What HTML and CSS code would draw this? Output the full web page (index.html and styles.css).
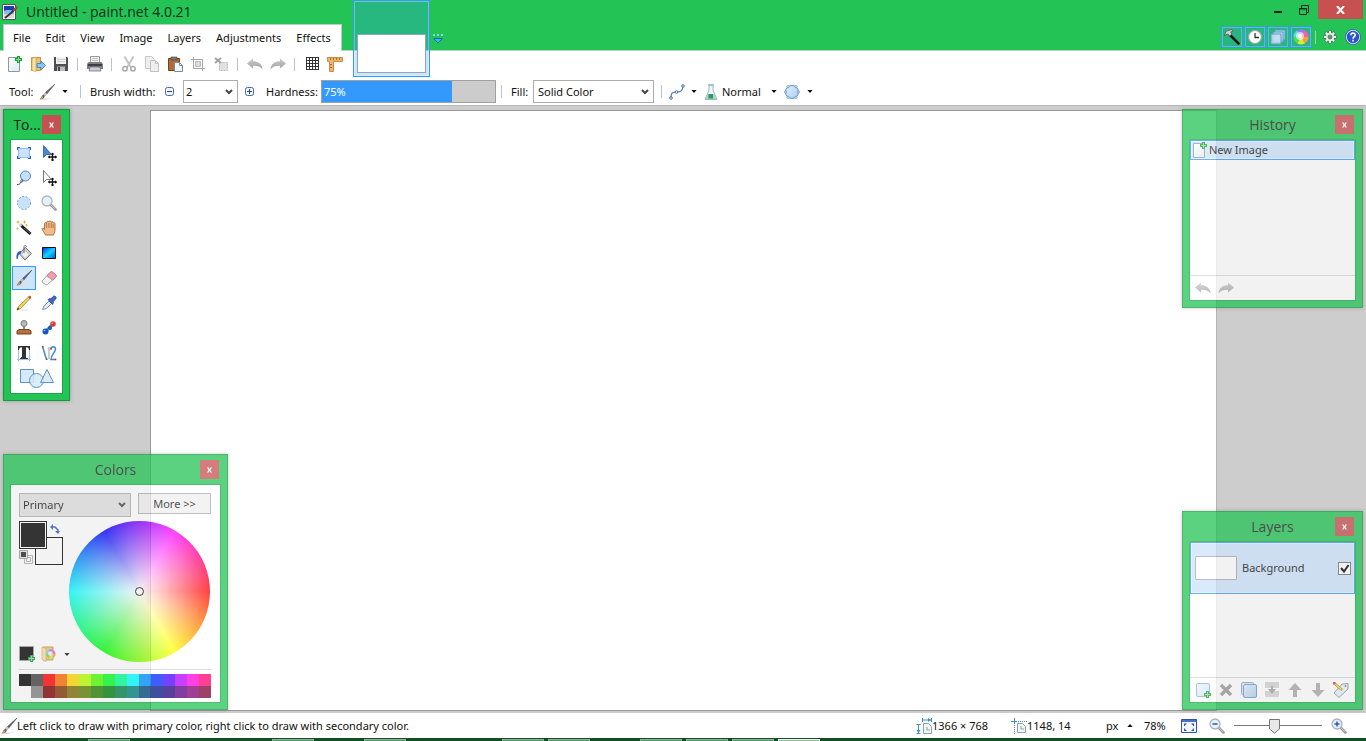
FILE: index.html
```
<!DOCTYPE html>
<html lang="en">
<head>
    <meta charset="UTF-8">
    <meta name="viewport" content="width=device-width, initial-scale=1.0">
    <title>Untitled - paint.net 4.0.21</title>
    <link rel="stylesheet" href="styles.css">
</head>
<body>
    <!-- shared icons -->
    <svg class="defs" aria-hidden="true">
        <defs>
            <linearGradient id="gray" x1="0" y1="0" x2="0" y2="1"><stop offset="0" stop-color="#cccccc"/><stop offset="1" stop-color="#a2a2a2"/></linearGradient>
            <linearGradient id="page" x1="0" y1="0" x2="1" y2="1"><stop offset="0" stop-color="#fff"/><stop offset="1" stop-color="#dde9ee"/></linearGradient>
            <linearGradient id="blue" x1="0" y1="0" x2="1" y2="1"><stop offset="0" stop-color="#e4f1fd"/><stop offset="1" stop-color="#a9cdf0"/></linearGradient>
            <linearGradient id="sea" x1="0" y1="0" x2="1" y2="1"><stop offset="0" stop-color="#0030e8"/><stop offset=".5" stop-color="#10d8ff"/><stop offset="1" stop-color="#0050e8"/></linearGradient>
        </defs>
        <symbol id="i-new" viewBox="0 0 16 16">
            <path d="M1.500 1.500h11v14h-11z" fill="url(#page)" stroke="#8b9aa3"/>
            <path d="M10 0h3v2h2v3h-2v2h-3V5H8V2h2z" fill="#1d9a35"/>
            <path d="M11 1h1v2h2v1h-2v2h-1V4H9V3h2z" fill="#7be387"/>
        </symbol>
        <symbol id="i-undo" viewBox="0 0 16 16">
            <path d="M0 7.500 6 2.500v2.700c5 0 9 2.500 9.500 8C13.500 10.500 10.500 9.600 6 9.700v2.800z" fill="url(#gray)"/>
        </symbol>
        <symbol id="i-redo" viewBox="0 0 16 16">
            <path d="M16 7.500 10 2.500v2.700C5 5.200 1 7.700.5 13.200 2.500 10.500 5.500 9.600 10 9.700v2.800z" fill="url(#gray)"/>
        </symbol>
        <symbol id="i-brush" viewBox="0 0 16 16">
            <path d="M4 14.500h10l-8 1.500H2z" fill="#ddd"/>
            <path d="M15.800.2 6.500 8.500l1.300 1.500z" fill="#666" stroke="#444" stroke-width=".6"/>
            <path d="M6.500 8.500 4.500 10.800l1.300 1.200 2-2z" fill="#ccc" stroke="#888" stroke-width=".5"/>
            <path d="M4.500 10.800c-2 .5-2 2.700-4 4.700 2.500 0 4.800-.8 5.300-3.500z" fill="#6a5a50"/>
            <path d="m3.500 12-2.500 3.500 3-1.500z" fill="#e9b564"/>
        </symbol>
        <symbol id="i-caret" viewBox="0 0 7 4"><path d="M0 0h7L3.500 4z" fill="#111"/></symbol>
        <symbol id="i-glass" viewBox="0 0 16 16">
            <path d="m10 10 4.500 4.500" stroke="#969696" stroke-width="2.500" stroke-linecap="round"/>
            <path d="m10 9.800 4.300 4.200" stroke="#d0d0d0" stroke-width="1"/>
            <circle cx="6" cy="6" r="5" fill="#e6f0fa" stroke="#adb4bd" stroke-width="1.300"/>
        </symbol>
        <symbol id="i-wheel" viewBox="0 0 16 16">
            <path d="M8 8 15.500 8A7.500 7.500 0 0 1 11.700 14.500z" fill="#ff9b42"/>
            <path d="M8 8 11.800 14.500A7.500 7.500 0 0 1 4.200 14.500z" fill="#d9ec3b"/>
            <path d="M8 8 4.300 14.500A7.500 7.500 0 0 1 .5 8z" fill="#4fdc5a"/>
            <path d="M8 8 .5 8A7.500 7.500 0 0 1 4.300 1.500z" fill="#5fd5f5"/>
            <path d="M8 8 4.200 1.500A7.500 7.500 0 0 1 11.800 1.500z" fill="#a278f5"/>
            <path d="M8 8 11.700 1.500A7.500 7.500 0 0 1 15.500 8z" fill="#f95cb5"/>
            <circle cx="7" cy="7" r="4" fill="#fff" opacity=".6"/>
            <circle cx="7" cy="7" r="2.200" fill="#fff" opacity=".8"/>
        </symbol>
        <symbol id="i-plus" viewBox="0 0 7 7">
            <path d="M2 0h3v2h2v3H5v2H2V5H0V2h2z" fill="#1d9a35"/><path d="M3 1h1v2h2v1H4v2H3V4H1V3h2z" fill="#7be387"/>
        </symbol>
        <symbol id="i-x" viewBox="0 0 7 7"><path d="M0 0h2.200L3.500 2 4.800 0H7L4.700 3.500 7 7H4.800L3.500 5 2.200 7H0l2.300-3.500z" fill="#fff"/></symbol>
    </svg>

    <header class="titlebar">
        <div class="caption">
            <svg class="icon" viewBox="0 0 16 16"><path d="M.5.5h13v15H.5z" fill="#f5f5f5" stroke="#555"/><path d="M2 2h10v7H2z" fill="#173fae"/><path d="M2 7c3-2 6 0 10-1v4H2z" fill="#8eb9e8"/><path d="M2 10h10v4H2z" fill="#dcdcdc"/><path d="m15 3-6 6-6 5" stroke="#35353f" stroke-width="2" fill="none"/><path d="m15.500 2.500-4 4" stroke="#c05040" stroke-width="1.500"/></svg>
            <h1>Untitled - paint.net 4.0.21</h1>
            <div class="window-buttons">
                <button class="win" aria-label="Minimize"><svg width="10" height="10"><path d="M1 6h8v2H1z" fill="#222"/></svg></button>
                <button class="win" aria-label="Restore"><svg width="10" height="10"><path d="M.5 3.500h7v6h-7zM.5 4h7M2.500 3V.5h7v7H8" fill="none" stroke="#222"/></svg></button>
                <button class="win close" aria-label="Close"><svg width="9" height="8"><path d="m1 0 7 8M8 0 1 8" stroke="#fff" stroke-width="2"/></svg></button>
            </div>
        </div>
        <div class="menu-row">
            <nav class="menu">
                <button>File</button>
                <button>Edit</button>
                <button>View</button>
                <button>Image</button>
                <button>Layers</button>
                <button>Adjustments</button>
                <button>Effects</button>
            </nav>
            <div class="tray">
                <button class="toggle" aria-label="Tools"><svg class="icon" viewBox="0 0 16 16"><path d="m6 6 8.500 8.500" stroke="#181818" stroke-width="2.500" stroke-linecap="round"/><path d="M0 6.500 2.500 2 8 .5l1 1.500-2.500 1L8 5 5.500 7 4 5z" fill="#d5d5d5" stroke="#555" stroke-width=".8"/></svg></button>
                <button class="toggle" aria-label="History"><svg class="icon" viewBox="0 0 16 16"><circle cx="8" cy="8" r="6.500" fill="#fff" stroke="#9aa" stroke-width="1.200"/><path d="M8 4v4.500h4" fill="none" stroke="#333" stroke-width="1.300"/></svg></button>
                <button class="toggle" aria-label="Layers"><svg class="icon" viewBox="0 0 16 16"><g fill="#c4dff3" stroke="#5c9ccc" fill-opacity=".8"><path d="M5 1h10v10H5z"/><path d="M3 3h10v10H3z"/><path d="M1 5h10v10H1z"/></g></svg></button>
                <button class="toggle" aria-label="Colors"><svg class="icon"><use href="#i-wheel"/></svg></button>
                <span class="tray-sep"></span>
                <button class="plain" aria-label="Settings"><svg class="icon" viewBox="0 0 16 16"><path d="M8 1.500v13M1.500 8h13M3.400 3.400l9.200 9.200M12.600 3.400l-9.200 9.200" stroke="#4e7a5c" stroke-width="3.400"/><path d="M8 2v12M2 8h12M3.800 3.800l8.400 8.400M12.200 3.800l-8.400 8.400" stroke="#eee" stroke-width="2"/><circle cx="8" cy="8" r="4" fill="#eee"/><circle cx="8" cy="8" r="2.100" fill="#3fa860" stroke="#666" stroke-width=".8"/></svg></button>
                <button class="plain" aria-label="Help"><svg class="icon" viewBox="0 0 16 16"><circle cx="8" cy="8" r="6.800" fill="#2c55c8" stroke="#dce6fb" stroke-width="1.200"/><circle cx="8" cy="8" r="7.500" fill="none" stroke="#2a4aa8" stroke-width=".7"/><path d="M5.800 6.300c0-3 4.600-2.800 4.400-.2C10.100 7.700 8 7.700 8 9.800M8 10.800v1.700" fill="none" stroke="#fff" stroke-width="1.600"/></svg></button>
            </div>
        </div>
        <div class="doc-strip">
            <button class="doc-tab" aria-label="Untitled"><span class="doc-thumb"></span></button>
            <button class="doc-more" aria-label="Image list"><svg width="10" height="10"><path d="M0 1h2M4 1h2M8 1h2" stroke="#86dcef" stroke-width="2"/><path d="M.5 4.500h9L5 9z" fill="#25b9f0" stroke="#1670a8"/></svg></button>
        </div>
    </header>

    <div class="toolbar main-tools">
        <button class="tb" aria-label="New"><svg class="icon"><use href="#i-new"/></svg></button>
        <button class="tb" aria-label="Open"><svg class="icon" viewBox="0 0 16 16"><path d="M1.500 1.500h9v13h-9z" fill="#ecc36c" stroke="#c79443"/><path d="M2 2.500 6 1v14.500l-4-1z" fill="#fbe3a4" stroke="#cf9f50" stroke-width=".7"/><path d="M7 7.500h4V5l4.500 4.500L11 14v-2.500H7z" fill="#8cc8f5" stroke="#3b82c4" stroke-width=".9"/></svg></button>
        <button class="tb" aria-label="Save"><svg class="icon" viewBox="0 0 16 16"><path d="M1 1h13l1 1v13H1z" fill="#4b4f55"/><path d="M3 1h10v7H3z" fill="#f0f0f0"/><path d="M4 10.500h8V15H4z" fill="#bbb"/><path d="M5 11h2v4H5z" fill="#444"/><path d="M4 3.500h8M4 5.500h8" stroke="#ccc"/></svg></button>
        <span class="sep"></span>
        <button class="tb" aria-label="Print"><svg class="icon" viewBox="0 0 16 16"><path d="M3.500.5h9v7h-9z" fill="#f4f4f4" stroke="#999"/><path d="M5 2.500h6M5 4.500h6" stroke="#bbb"/><path d="M1.500 6h13L16 8v5H0V8z" fill="#7b7f86"/><path d="M1 8h14v2H1z" fill="#3b3e45"/><path d="M3 11h10l1 4H2z" fill="#c9cdd3" stroke="#666" stroke-width=".7"/></svg></button>
        <span class="sep"></span>
        <button class="tb" aria-label="Cut"><svg class="icon" viewBox="0 0 16 16"><path d="m3.500.5 6.500 11M12.500.5 6 11.500" stroke="#c2c2c2" stroke-width="1.800"/><circle cx="4" cy="12.800" r="2.200" fill="none" stroke="#aaa" stroke-width="1.500"/><circle cx="12" cy="12.800" r="2.200" fill="none" stroke="#aaa" stroke-width="1.500"/></svg></button>
        <button class="tb" aria-label="Copy"><svg class="icon" viewBox="0 0 16 16"><path d="M1.500.5h6l3 3v9h-9z" fill="#eee" stroke="#c8c8c8"/><path d="M6.500 4.500h5l3 3v8h-8z" fill="#eee" stroke="#c0c0c0"/><path d="M11.500 4.500v3h3" fill="none" stroke="#c4c4c4"/></svg></button>
        <button class="tb" aria-label="Paste"><svg class="icon" viewBox="0 0 16 16"><path d="M1.500 2.500h11v12h-11z" fill="#b36a35" stroke="#74401c"/><path d="M4 1h6v3H4z" fill="#777" stroke="#444" stroke-width=".6"/><path d="M7.500 6.500h5l3 3v6h-8z" fill="#f1f6fb" stroke="#7c8ca0"/><path d="M12.500 6.500v3h3" fill="none" stroke="#7c8ca0"/></svg></button>
        <button class="tb" aria-label="Crop"><svg class="icon" viewBox="0 0 16 16"><path d="M1 3.500h11.500V15M3.500 1v11.500H15" fill="none" stroke="#a5a5a5"/><path d="M5.500 5.500h5v5h-5z" fill="#ddd" stroke="#bbb"/></svg></button>
        <button class="tb" aria-label="Deselect"><svg class="icon" viewBox="0 0 16 16"><path d="M6.500 6.500h8v8h-8z" fill="#e0e0e0" stroke="#bbb" stroke-dasharray="2 1"/><path d="m2 2 6 5M8 2 2 7" stroke="#a2a2a2" stroke-width="2"/></svg></button>
        <span class="sep"></span>
        <button class="tb" aria-label="Undo"><svg class="icon"><use href="#i-undo"/></svg></button>
        <button class="tb" aria-label="Redo"><svg class="icon"><use href="#i-redo"/></svg></button>
        <span class="sep"></span>
        <button class="tb" aria-label="Pixel grid"><svg class="icon" viewBox="0 0 16 16"><path d="M2 1.500h13M2 4.500h13M2 7.500h13M2 10.500h13M2 13.500h13M2.500 1v13M5.500 1v13M8.500 1v13M11.500 1v13M14.500 1v13" stroke="#333" fill="none"/></svg></button>
        <button class="tb" aria-label="Rulers"><svg class="icon" viewBox="0 0 16 16"><path d="M.5 1.500h15v4h-9v10h-4v-10h-2z" fill="#edb46c" stroke="#c98a4a"/><path d="M3.500 2v2M6.500 2v2M9.500 2v2M12.500 2v2M3 8.500h2M3 11.500h2" stroke="#a86c32"/></svg></button>
    </div>

    <div class="toolbar">
        <span class="label tool-label">Tool:</span>
        <button class="drop" aria-label="Tool"><svg class="icon"><use href="#i-brush"/></svg><svg class="caret"><use href="#i-caret"/></svg></button>
        <span class="sep"></span>
        <label class="label brush-label" for="brush-width">Brush width:</label>
        <button class="step" aria-label="Decrease"><svg width="9" height="9"><rect x=".5" y=".5" width="8" height="8" rx="2" fill="#eef3fb" stroke="#53679a"/><path d="M2 4.500h5" stroke="#274a8d"/></svg></button>
        <select id="brush-width" class="combo brush-width"><option>2</option></select>
        <button class="step" aria-label="Increase"><svg width="9" height="9"><rect x=".5" y=".5" width="8" height="8" rx="2" fill="#eef3fb" stroke="#53679a"/><path d="M2 4.500h5M4.500 2v5" stroke="#274a8d"/></svg></button>
        <label class="label hardness-label" for="hardness">Hardness:</label>
        <div class="hardness">
            <input type="range" id="hardness" min="0" max="100" value="75">
            <span>75%</span>
        </div>
        <span class="sep"></span>
        <label class="label fill-label" for="fill">Fill:</label>
        <select id="fill" class="combo fill"><option>Solid Color</option></select>
        <span class="sep wide"></span>
        <button class="drop" aria-label="Antialiasing"><svg class="icon" viewBox="0 0 16 16"><path d="M2 14C2 9 3 8 7.500 8S13.500 7 14 2" fill="none" stroke="#3e78b4" stroke-width="1.200"/><g fill="#fff" stroke="#3e6ea5"><circle cx="2" cy="14" r="1.300"/><circle cx="7.500" cy="8" r="1.300"/><circle cx="14" cy="2" r="1.300"/></g></svg><svg class="caret"><use href="#i-caret"/></svg></button>
        <button class="drop blend"><svg class="icon" viewBox="0 0 16 16"><path d="M6 1v5l-4 9.500h12L10 6V1z" fill="#edf6fa" stroke="#9ab8c4"/><path d="M4.500 10h7l2 5h-11z" fill="#9fd8bb"/><path d="M5.500 10h4.500v4.500H5.500z" fill="#2f9a5f"/><path d="M5 1h6" stroke="#9ab8c4" stroke-width="1.500"/></svg><span>Normal</span><svg class="caret"><use href="#i-caret"/></svg></button>
        <button class="drop" aria-label="Selection clipping"><svg class="icon" viewBox="0 0 16 16"><circle cx="8" cy="8" r="6.500" fill="url(#blue)" stroke="#5b8fc4"/><g fill="#fff" stroke="#5b8fc4" stroke-width=".8"><circle cx="1.500" cy="8" r="1.100"/><circle cx="14.500" cy="8" r="1.100"/><circle cx="4" cy="2.700" r="1.100"/><circle cx="12" cy="2.700" r="1.100"/><circle cx="4" cy="13.300" r="1.100"/><circle cx="12" cy="13.300" r="1.100"/></g></svg><svg class="caret"><use href="#i-caret"/></svg></button>
    </div>

    <main class="workspace">
        <div class="canvas"></div>

        <section class="palette tools" aria-label="Tools">
            <div class="palette-title"><h2>To...</h2><button class="palette-close" aria-label="Close"><svg><use href="#i-x"/></svg></button></div>
            <div class="palette-body tool-grid">
                <button aria-label="Rectangle select"><svg class="icon" viewBox="0 0 16 16"><path d="M2.500 3.500h11v9h-11z" fill="#c8e2fb" stroke="#4c86c8" stroke-dasharray="1 1"/><path d="M1 2h3v1H2v2H1zM15 2h-3v1h2v2h1zM1 14h3v-1H2v-2H1zM15 14h-3v-1h2v-2h1z" fill="#2068d0"/></svg></button>
                <button aria-label="Move selected pixels"><svg class="icon" viewBox="0 0 16 16"><path d="M2.500.5v12l3-3 5 0z" fill="#4a86d4" stroke="#2c5796" stroke-width=".8"/><path d="M11.500 8v8M7.500 12h8" stroke="#111" stroke-width="1.300"/><path d="m11.500 7.500 1.800 2H9.700zM11.500 16.500l1.800-2H9.700zM7 12l2-1.800v3.600zM16 12l-2-1.800v3.600z" fill="#111"/></svg></button>
                <button aria-label="Lasso select"><svg class="icon" viewBox="0 0 16 16"><circle cx="9.500" cy="6" r="5" fill="#c4e0fb" stroke="#4d86c0"/><path d="M6.500 9.500c-2 0-2.500 2.500-.5 2.500 1 0 1-1.500.5-2M5 12c-.5 2-2 2.500-4 2.500" fill="none" stroke="#444"/></svg></button>
                <button aria-label="Move selection"><svg class="icon" viewBox="0 0 16 16"><path d="M2.500.5v12l3-3 5 0z" fill="#fff" stroke="#46576e" stroke-width=".8"/><path d="M11.500 8v8M7.500 12h8" stroke="#111" stroke-width="1.300"/><path d="m11.500 7.500 1.800 2H9.700zM11.500 16.500l1.800-2H9.700zM7 12l2-1.800v3.600zM16 12l-2-1.800v3.600z" fill="#111"/></svg></button>
                <button aria-label="Ellipse select"><svg class="icon" viewBox="0 0 16 16"><circle cx="8" cy="8" r="6.500" fill="#c8e2fb" stroke="#6f9fd0" stroke-dasharray="2 1.500"/></svg></button>
                <button aria-label="Zoom"><svg class="icon"><use href="#i-glass"/></svg></button>
                <button aria-label="Magic wand"><svg class="icon" viewBox="0 0 16 16"><path d="M4 4.500 14.500 14" stroke="#1c1c1c" stroke-width="3"/><path d="m3.200 4 2.200 2" stroke="#ddd" stroke-width="2.600"/><path d="m8 8 6 5" stroke="#777" stroke-width=".7"/><path d="M2 .5v3M.5 2h3M8.500.5v3M7 2h3M1.500 7.500v2M.5 8.500h2M10.500 4v2M9.500 5h2" stroke="#d9b62d"/></svg></button>
                <button aria-label="Pan"><svg class="icon" viewBox="0 0 16 16"><path d="M4.500 15c-1-2-3-4.500-3.500-6.500.5-1 1.500-.5 2.500 1V3.500c.3-1.200 1.600-1.200 2 0C5.500.8 7.400.5 7.800 2c.2-1.500 2.200-1.300 2.400.3.600-1 1.900-.7 2.100.7.800-.7 1.700-.2 1.700 1V10c0 2-1 3.500-1.500 5z" fill="#eebd8a" stroke="#a8672e" stroke-width=".9"/><path d="M5.600 3.500V8M7.900 3v5M10.200 3v5M12.200 4v4" stroke="#a8672e" stroke-width=".8"/></svg></button>
                <button aria-label="Paint bucket"><svg class="icon" viewBox="0 0 16 16"><path d="M4 7.500 9.500 2.500l6 6L9 15 4 9.500z" fill="#c9cbcf" stroke="#77797d"/><path d="m9 6 3.500 3.500L9 13 6 9.500z" fill="#efefef"/><path d="M8 8V2c0-2 2.500-2 2.500 0" fill="none" stroke="#666"/><path d="M5 6C1.500 6 0 9 .5 14l1.500-.5c0-3 1-4.500 3-5z" fill="#2c5cc5"/></svg></button>
                <button aria-label="Gradient"><svg class="icon" viewBox="0 0 16 16"><path d="M1.500 2.500h13v11h-13z" fill="url(#sea)" stroke="#111"/></svg></button>
                <button class="selected" aria-label="Paintbrush"><svg class="icon"><use href="#i-brush"/></svg></button>
                <button aria-label="Eraser"><svg class="icon" viewBox="0 0 16 16"><path d="m1 11 8-8.500c1-1 2-1 3 0l2.500 2c1 1 1 2 0 3L7 14c-1 1-2 1-3 0l-2.500-1.500z" fill="#f3f3f3" stroke="#999" stroke-width=".9"/><path d="m6 6 3-3.500c1-1 2-1 3 0l2.500 2c1 1 1 2 0 3L11.500 10z" fill="#ef9fae" stroke="#c4727f" stroke-width=".8"/></svg></button>
                <button aria-label="Pencil"><svg class="icon" viewBox="0 0 16 16"><path d="m1 15 1.500-3.500L12.500 2l1.500 1.500L4.500 13.500z" fill="#f5dc56" stroke="#9b7a24" stroke-width=".8"/><path d="M12.500 2c1-1.500 3.500-.5 1.500 1.500z" fill="#e04f4f" stroke="#c03838"/><path d="m1 15 .8-2.200L3.300 14z" fill="#222"/><path d="M4 15h8" stroke="#ddd"/></svg></button>
                <button aria-label="Color picker"><svg class="icon" viewBox="0 0 16 16"><path d="M1.500 14.500 3 11l5-5 2.500 2.500-5 5z" fill="#dcebfb" stroke="#7d93b4"/><path d="m7 4.500 2-1 1 .5C12 1 13 .5 14.500 1.500S15 4.500 12 6.500l.5 1-1 2z" fill="#3f66cf" stroke="#27469b" stroke-width=".8"/></svg></button>
                <button aria-label="Clone stamp"><svg class="icon" viewBox="0 0 16 16"><circle cx="8" cy="3.500" r="3" fill="#bbb" stroke="#777"/><path d="M7 6.500h2V10H7z" fill="#888"/><path d="M3 9.500h10l2 1.500v3H1v-3z" fill="#ba7040" stroke="#71401c"/></svg></button>
                <button aria-label="Recolor"><svg class="icon" viewBox="0 0 16 16"><path d="m5 11 6-6" stroke="#339bd2" stroke-width="3"/><circle cx="4.500" cy="11.500" r="3" fill="#1a52c4"/><circle cx="9" cy="8" r="2" fill="#155c9c"/><circle cx="12" cy="4" r="2.800" fill="#df3a3a"/><circle cx="11.300" cy="3.300" r=".8" fill="#ffb0b0"/><circle cx="3.500" cy="10.500" r=".8" fill="#9fc4ff"/></svg></button>
                <button aria-label="Text"><svg class="icon" viewBox="0 0 16 16"><path d="M2.500 1v15M13.500 1v15M1 14.500h14" stroke="#9fc0ec"/><path d="M2 1h12v4h-1c-.3-2-1-2.700-3-2.700V12c0 .8.500 1.200 2 1.200v.8H4v-.8c1.500 0 2-.4 2-1.200V2.300C4 2.300 3.300 3 3 5H2z" fill="#333"/></svg></button>
                <button aria-label="Line / Curve"><svg class="icon" viewBox="0 0 16 16"><path d="m1.500 1.500 4 13M10 4c0-3 4.500-3 4.500 0S10 10 10 14.500h4.500" fill="none" stroke="#3b8cd0" stroke-width="1.500"/><path d="M8 2v12" stroke="#999"/><path d="M1 1h1.500v1.500H1zM5 13.500h1.500V15H5zM9.300 3.300h1.500v1.500H9.300zM13.800 13.800h1.500v1.500h-1.500z" fill="#e02020"/></svg></button>
                <button class="shapes" aria-label="Shapes"><svg viewBox="0 0 36 20"><g fill="#d5e9f8" stroke="#5c93c4"><path d="M1.500 1.500h13v13h-13z"/><circle cx="17.500" cy="12.500" r="7" fill-opacity=".85"/><path d="M28 1.500 34.500 14.500h-13z" fill-opacity=".85"/></g></svg></button>
            </div>
        </section>

        <section class="palette colors">
            <div class="palette-title"><h2>Colors</h2><button class="palette-close" aria-label="Close"><svg><use href="#i-x"/></svg></button></div>
            <div class="palette-body colors-body">
                <div class="colors-top">
                    <select class="combo which" aria-label="Active color"><option>Primary</option></select>
                    <button class="more">More &gt;&gt;</button>
                </div>
                <div class="colors-mid">
                    <div class="colors-side">
                        <div class="wells">
                            <button class="well secondary" aria-label="Secondary color"></button>
                            <button class="well primary" aria-label="Primary color"></button>
                            <button class="swap" aria-label="Swap"><svg width="10" height="10" viewBox="0 0 10 10"><path d="M2 3h3l3 3v2" fill="none" stroke="#2a55cc" stroke-width="1.500"/><path d="M0 3 3 0v6zM8 10 5 7h5z" fill="#2a55cc"/></svg></button>
                            <button class="reset" aria-label="Reset"><svg width="15" height="15"><path d="M5.500 5.500h8v8h-8z" fill="#fff" stroke="#aaa"/><path d="M7.500 7.500h4v4h-4z" fill="none" stroke="#aaa"/><path d="M.5.5h8v8h-8z" fill="#e4e4e4" stroke="#999"/><path d="M2 2h5v5H2z" fill="#222"/></svg></button>
                        </div>
                        <div class="color-actions">
                            <button aria-label="Add color"><svg class="icon" viewBox="0 0 16 16"><path d="M.5.5h14v14H.5z" stroke="#999"/><use href="#i-plus" x="9" y="9" width="7" height="7"/></svg></button>
                            <button aria-label="Palettes"><svg class="icon" viewBox="0 0 16 16"><path d="M2 1h10v13H2z" fill="#ecc36c" stroke="#c79443"/><path d="m1 1 4 1.500v13l-4-2z" fill="#fbe3a4" stroke="#cf9f50" stroke-width=".7"/><use href="#i-wheel" x="5" y="3" width="10" height="10"/></svg><svg class="caret"><use href="#i-caret"/></svg></button>
                        </div>
                    </div>
                    <div class="wheel"><span></span></div>
                </div>
                <div class="swatches" id="swatches"></div>
            </div>
        </section>

        <section class="palette history">
            <div class="palette-title"><h2>History</h2><button class="palette-close" aria-label="Close"><svg><use href="#i-x"/></svg></button></div>
            <div class="palette-body">
                <div class="list">
                    <div class="history-item"><svg class="icon"><use href="#i-new"/></svg><span>New Image</span></div>
                </div>
                <div class="palette-footer">
                    <button aria-label="Undo"><svg class="icon"><use href="#i-undo"/></svg></button>
                    <button aria-label="Redo"><svg class="icon"><use href="#i-redo"/></svg></button>
                </div>
            </div>
        </section>

        <section class="palette layers">
            <div class="palette-title"><h2>Layers</h2><button class="palette-close" aria-label="Close"><svg><use href="#i-x"/></svg></button></div>
            <div class="palette-body">
                <div class="list">
                    <div class="layer-item">
                        <span class="layer-thumb"></span>
                        <label for="layer-visible">Background</label>
                        <input type="checkbox" id="layer-visible" checked>
                    </div>
                </div>
                <div class="palette-footer">
                    <button aria-label="Add layer"><svg class="icon" viewBox="0 0 16 16"><rect x="1.500" y="1.500" width="13" height="13" rx="1.500" fill="url(#blue)" fill-opacity=".6" stroke="#8db0d4"/><use href="#i-plus" x="9" y="9" width="7" height="7"/></svg></button>
                    <button aria-label="Delete layer"><svg class="icon" viewBox="0 0 16 16"><path d="m3 3 10 10M13 3 3 13" stroke="#999" stroke-width="3.500"/></svg></button>
                    <button aria-label="Duplicate layer"><svg class="icon" viewBox="0 0 16 16"><rect x=".5" y=".5" width="12" height="12" rx="1" fill="#dcebf9" stroke="#7ba5d0"/><rect x="2.500" y="2.500" width="13" height="13" rx="1.500" fill="url(#blue)" stroke="#6a97c8"/></svg></button>
                    <button aria-label="Merge layer down"><svg class="icon" viewBox="0 0 16 16"><path d="M1 0h14v6H1zM1 9h14v6H1z" fill="#d4d4d4"/><path d="M7 4h2v3h3l-4 5-4-5h3z" fill="#a2a2a2"/></svg></button>
                    <button aria-label="Move layer up"><svg class="icon" viewBox="0 0 16 16"><path d="m8 1 6.500 7H10v7H6V8H1.500z" fill="#aaa"/></svg></button>
                    <button aria-label="Move layer down"><svg class="icon" viewBox="0 0 16 16"><path d="m8 15 6.500-7H10V1H6v7H1.500z" fill="#aaa"/></svg></button>
                    <button aria-label="Layer properties"><svg class="icon" viewBox="0 0 16 16"><path d="m1 11 8-9 6-.5L15 7l-9 8.500z" fill="#e6f1f4" stroke="#7d9aa5"/><circle cx="12.500" cy="4" r="1" fill="#888"/><path d="m1 1 8 7" stroke="#b08a20" stroke-width="2.500"/><path d="m1.500 1.500 7 6" stroke="#f5d64e" stroke-width="1.400"/><path d="m0 0 2 2" stroke="#d33" stroke-width="2.500"/></svg></button>
                </div>
            </div>
        </section>
    </main>

    <footer class="statusbar">
        <svg class="icon"><use href="#i-brush"/></svg>
        <span class="help">Left click to draw with primary color, right click to draw with secondary color.</span>
        <span class="info"><svg class="icon" viewBox="0 0 16 16"><path d="M7.500 5.500h5l3 3v7h-8z" fill="#f2f7f7" stroke="#8ba3a6"/><path d="M11 9v3h3" stroke="#8ba3a6" fill="none"/><path d="M6.500 0v4M15.500 0v4M7 2h8M2.500 7v8M.5 6.500h4M.5 15.500h4" stroke="#3b8fd0" fill="none"/><path d="m12 0 3 2-3 2zM.5 12h4l-2 3z" fill="#3b8fd0"/></svg>1366 × 768</span>
        <span class="info"><svg class="icon" viewBox="0 0 16 16"><path d="M6.500 5.500h5l3 3v6h-8z" fill="#f2f7f7" stroke="#8ba3a6"/><path d="M10 8v3h3" stroke="#8ba3a6" fill="none"/><path d="M3.500 0v6M0 3.500h6" stroke="#3b8fd0"/><path d="M7 3.500h9M3.500 7v9" stroke="#3b8fd0" stroke-dasharray="1 1"/></svg>1148, 14</span>
        <button class="unit">px<svg class="caret up"><use href="#i-caret"/></svg></button>
        <span class="zoom-value">78%</span>
        <button class="zoom-button" aria-label="Fit to window"><svg class="icon" viewBox="0 0 16 16"><path d="M.5 1.500h15v13H.5z" fill="#f3f6fc" stroke="#2f52b5"/><path d="M1 2h14v2H1z" fill="#4a70d0"/><path d="M3 5.500h3L3 8.500zM13 5.500h-3l3 3zM3 13h3l-3-3zM13 13h-3l3-3z" fill="#2d55c0"/></svg></button>
        <button class="zoom-button" aria-label="Zoom out"><svg class="icon" viewBox="0 0 16 16"><use href="#i-glass"/><path d="M3.500 6h5" stroke="#2558c4" stroke-width="1.500"/></svg></button>
        <input type="range" class="zoom-slider" aria-label="Zoom" min="0" max="100" value="46">
        <button class="zoom-button" aria-label="Zoom in"><svg class="icon" viewBox="0 0 16 16"><use href="#i-glass"/><path d="M3.500 6h5M6 3.500v5" stroke="#2558c4" stroke-width="1.500"/></svg></button>
    </footer>

    <div class="taskbar">
        <i class="on"></i><i></i><i></i><i></i><i class="on"></i><i></i><i class="on"></i><i></i><i></i><i class="on"></i><i class="on"></i><i></i><i class="on"></i><i class="on"></i><i class="on"></i><i class="on active"></i>
    </div>

    <script>
        const colors = [
            '#000000', '#404040', '#ff0000', '#ff6a00', '#ffd800', '#b6ff00', '#4cff00', '#00ff21',
            '#00ff90', '#00ffff', '#0094ff', '#0026ff', '#4800ff', '#b200ff', '#ff00dc', '#ff006e',
            '#ffffff', '#808080', '#7f0000', '#7f3300', '#7f6a00', '#5b7f00', '#267f00', '#007f0e',
            '#007f46', '#007f7f', '#004a7f', '#00137f', '#21007f', '#57007f', '#7f006e', '#7f0037'
        ];
        const swatches = document.getElementById('swatches');
        colors.forEach(color => {
            const swatch = document.createElement('button');
            swatch.style.background = color;
            swatch.setAttribute('aria-label', color);
            swatches.appendChild(swatch);
        });
    </script>
</body>
</html>
```

FILE: styles.css
```
* {
    box-sizing: border-box;
}
body {
    margin: 0;
    height: 100vh;
    display: flex;
    flex-direction: column;
    overflow: hidden;
    background-color: white;
    color: #111;
    font-family: "Noto Sans", "Open Sans", sans-serif;
    font-size: 11px;
    line-height: 16px;
}
button, select, input {
    font: inherit;
    color: inherit;
    margin: 0;
}
button {
    display: flex;
    align-items: center;
    justify-content: center;
    padding: 0;
    border: none;
    background: none;
}
h1, h2 {
    margin: 0;
    font-family: "Open Sans", "Noto Sans", sans-serif;
    font-size: 14px;
    font-weight: normal;
    line-height: 20px;
}
.defs {
    position: absolute;
    width: 0;
    height: 0;
}
.icon {
    display: block;
    flex: none;
    width: 16px;
    height: 16px;
}
.caret {
    display: block;
    flex: none;
    width: 6px;
    height: 3px;
}
.caret.up {
    transform: rotate(180deg);
}

/* title bar and menu */
.titlebar {
    position: relative;
    background-color: #23c356;
    border-bottom: 1px solid #b8d2c1;
}
.caption {
    display: flex;
    height: 24px;
    padding: 0 3px 0 2px;
    align-items: center;
}
.caption h1 {
    flex: 1;
    margin-left: 8px;
    color: #10301a;
}
.window-buttons {
    display: flex;
    align-self: flex-start;
}
.win {
    width: 26px;
    height: 19px;
}
.win.close {
    width: 45px;
    margin-left: 1px;
    background-color: #c75050;
}
.menu-row {
    display: flex;
    height: 26px;
    padding: 0 2px 0 3px;
    justify-content: space-between;
}
.menu {
    display: flex;
    height: 27px;
    padding: 0 1px;
    background-color: white;
    border: 1px solid #b8d2c1;
    border-bottom: none;
    gap: 1px;
}
.menu button {
    padding: 0 7px;
}
.menu button:first-child {
    padding-left: 8px;
}
.menu button:last-child {
    padding-right: 9px;
}
.tray {
    display: flex;
    gap: 1px;
    align-items: center;
}
.toggle {
    width: 22px;
    height: 22px;
    background-color: #27b583;
    border: 1px solid #3399ff;
    box-shadow: inset 0 0 0 1px #59c69d;
}
.tray-sep {
    width: 1px;
    height: 13px;
    margin: 0 2px;
    background-color: #8bdca4;
}
.plain {
    width: 22px;
    height: 22px;
}

/* open image list, hangs over the toolbar */
.doc-strip {
    position: absolute;
    left: 353px;
    top: 0;
    display: flex;
    align-items: center;
    gap: 3px;
}
.doc-tab {
    width: 77px;
    height: 77px;
    padding: 0 3px 3px;
    align-items: flex-end;
    background-color: rgba(51, 153, 255, 0.25);
    border: 1px solid #3399ff;
    box-shadow: inset 0 0 0 1px rgba(255, 255, 255, 0.3);
}
.doc-thumb {
    width: 69px;
    height: 39px;
    background-color: white;
    border: 1px solid #8ea6bd;
}

/* toolbars */
.toolbar {
    display: flex;
    flex: none;
    height: 27px;
    padding-left: 3px;
    align-items: center;
}
.main-tools {
    padding-bottom: 1px;
}
.tb {
    width: 23px;
    height: 23px;
}
.sep {
    width: 1px;
    height: 13px;
    margin: 0 5px;
    background-color: #b4c5d8;
}
.sep.wide {
    margin: 0 7px;
}
.label {
    flex: none;
    white-space: nowrap;
}
.tool-label {
    width: 36px;
    padding-left: 6px;
}
.brush-label {
    width: 79px;
    padding-left: 4px;
}
.hardness-label {
    width: 67px;
    padding-left: 12px;
}
.fill-label {
    width: 26px;
    padding-left: 4px;
}
.drop {
    gap: 7px;
    padding-right: 7px;
}
.drop.blend {
    gap: 3px;
}
.drop.blend .caret {
    margin-left: 7px;
}
.sep.wide + .drop {
    gap: 6px;
    padding-right: 6px;
}
.combo {
    appearance: none;
    height: 23px;
    padding: 0 4px;
    border: 1px solid #acacac;
    border-radius: 0;
    background: white url("data:image/svg+xml,%3Csvg xmlns='http://www.w3.org/2000/svg' width='8' height='6'%3E%3Cpath d='M1 1l3 3 3-3' fill='none' stroke='%23444' stroke-width='2'/%3E%3C/svg%3E") no-repeat right 4px center;
}
.step {
    margin-right: 9px;
}
.brush-width {
    width: 55px;
    padding: 0 2px;
}
.brush-width + .step {
    margin: 0 0 0 7px;
}
.fill {
    width: 121px;
}
.hardness {
    position: relative;
    width: 175px;
    height: 23px;
    border: 1px solid #a0a0a0;
}
.hardness input {
    display: block;
    appearance: none;
    width: 100%;
    height: 100%;
    background: linear-gradient(to right, #3399ff 75%, #cccccc 75%);
}
.hardness input::-webkit-slider-thumb {
    appearance: none;
    width: 1px;
    height: 21px;
}
.hardness span {
    position: absolute;
    left: 2px;
    top: 3px;
    color: white;
    pointer-events: none;
}

/* workspace */
.workspace {
    position: relative;
    flex: 1;
    min-height: 0;
    padding: 4px 149px 2px 150px;
    background-color: #cdcdcd;
    border-top: 1px solid #b5b5b5;
}
.canvas {
    height: 100%;
    background-color: white;
    border: 1px solid #999;
    border-right-color: #b4b4b4;
}

/* floating windows */
.palette {
    position: absolute;
    padding: 0 6px 6px;
    background-color: #23c356;
    border: 1px solid #119c3d;
    box-shadow: 0 0 4px rgba(0, 0, 0, 0.25);
    opacity: 0.75;
}
.palette.tools {
    left: 3px;
    top: 3px;
    width: 67px;
    opacity: 1;
}
.palette.colors {
    left: 3px;
    bottom: 3px;
    width: 225px;
}
.palette.history {
    right: 3px;
    top: 3px;
    width: 181px;
}
.palette.layers {
    right: 3px;
    bottom: 3px;
    width: 181px;
}
.palette-title {
    display: flex;
    height: 29px;
    padding: 0 2px 0 21px;
    align-items: center;
}
.tools .palette-title {
    padding-left: 2px;
}
.palette-title h2 {
    flex: 1;
    text-align: center;
    color: #222;
}
.palette-close {
    flex: none;
    width: 19px;
    height: 19px;
    background-color: #c75050;
}
.palette-close svg {
    width: 5px;
    height: 6px;
}
.palette-body {
    background-color: white;
    border: 1px solid #1aa548;
}
.tool-grid {
    display: grid;
    grid-template-columns: 1fr 1fr;
    gap: 1px;
    padding: 1px 1px 3px;
}
.tool-grid button {
    height: 24px;
}
.tool-grid .selected {
    background-color: #cce4fc;
    border: 1px solid #3399ff;
}
.tool-grid .shapes {
    grid-column: span 2;
}
.shapes svg {
    width: 36px;
    height: 20px;
}

/* colors window */
.colors-body {
    padding: 8px 8px 4px;
}
.colors-top {
    display: flex;
    gap: 7px;
    align-items: flex-start;
}
.which {
    flex: none;
    width: 112px;
    height: 24px;
    padding: 0 3px;
    background-color: #e1e1e1;
}
.more {
    width: 73px;
    height: 21px;
    background-color: #efefef;
    border: 1px solid #acacac;
}
.colors-mid {
    display: flex;
    gap: 6px;
    padding: 4px 0 7px;
    border-bottom: 1px solid #d5d8da;
}
.colors-side {
    display: flex;
    flex-direction: column;
    justify-content: space-between;
    width: 44px;
}
.wells {
    position: relative;
    height: 44px;
}
.well {
    position: absolute;
    width: 28px;
    height: 28px;
    border: 1px solid black;
    background-color: white;
}
.well.primary {
    left: 0;
    top: 0;
    background-color: black;
    box-shadow: inset 0 0 0 1px white;
}
.well.secondary {
    right: 0;
    bottom: 0;
}
.swap {
    position: absolute;
    left: 31px;
    top: 3px;
}
.reset {
    position: absolute;
    left: 0;
    bottom: 0;
}
.color-actions {
    display: flex;
    gap: 6px;
}
.color-actions button {
    gap: 7px;
}
.wheel {
    display: flex;
    flex: none;
    align-items: center;
    justify-content: center;
    width: 141px;
    height: 141px;
    border-radius: 50%;
    background: radial-gradient(closest-side, white, rgba(255, 255, 255, 0)), conic-gradient(from 90deg, red, yellow, lime, cyan, blue, magenta, red);
}
.wheel span {
    width: 9px;
    height: 9px;
    border: 1px solid #111;
    border-radius: 50%;
}
.swatches {
    display: grid;
    grid-template-columns: repeat(16, 12px);
    grid-auto-rows: 12px;
    padding-top: 4px;
}

/* history and layers */
.list {
    height: 135px;
}
.history-item {
    display: flex;
    height: 20px;
    padding-left: 1px;
    gap: 1px;
    align-items: center;
    background-color: #cce4fc;
    border: 1px solid #3399ff;
    box-shadow: inset 0 0 0 1px #e5f2ff;
}
.layer-item {
    display: flex;
    height: 52px;
    padding: 0 3px 0 4px;
    gap: 5px;
    align-items: center;
    background-color: #cce4fc;
    border: 1px solid #3399ff;
    box-shadow: inset 0 0 0 1px #e5f2ff;
}
.layer-item label {
    flex: 1;
}
.layer-thumb {
    width: 42px;
    height: 24px;
    background-color: white;
    border: 1px solid #aaa;
    border-radius: 1px;
}
.layer-item input {
    appearance: none;
    width: 13px;
    height: 13px;
    border: 1px solid #707070;
    background: white url("data:image/svg+xml,%3Csvg xmlns='http://www.w3.org/2000/svg' width='11' height='11'%3E%3Cpath d='M2 5l3 3.500L9.500 2' fill='none' stroke='black' stroke-width='2'/%3E%3C/svg%3E") no-repeat center;
}
.palette-footer {
    display: flex;
    height: 25px;
    padding-left: 1px;
    align-items: center;
    border-top: 1px solid #d8d8d8;
}
.palette-footer button {
    width: 23px;
}

/* status bar */
.statusbar {
    display: flex;
    flex: none;
    height: 25px;
    padding: 0 19px 0 1px;
    align-items: center;
}
.help {
    flex: 1;
    white-space: nowrap;
}
.info {
    display: flex;
    width: 95px;
    align-items: center;
}
.unit {
    width: 38px;
    gap: 9px;
    justify-content: flex-start;
}
.zoom-value {
    width: 28px;
}
.zoom-button {
    margin-left: 9px;
}
.zoom-button + .zoom-button {
    margin-left: 12px;
}
.zoom-slider {
    appearance: none;
    width: 88px;
    height: 16px;
    margin-left: 9px;
    background: linear-gradient(#777, #777) no-repeat center / 100% 1px;
}
.zoom-slider::-webkit-slider-thumb {
    appearance: none;
    width: 11px;
    height: 16px;
    background: url("data:image/svg+xml,%3Csvg xmlns='http://www.w3.org/2000/svg' width='11' height='16'%3E%3Cpath d='M.5 1.500h10v9.500l-5 4-5-4z' fill='%23e8e8e8' stroke='%23777'/%3E%3C/svg%3E") no-repeat;
}

/* top edge of the system taskbar */
.taskbar {
    display: flex;
    flex: none;
    height: 3px;
    padding: 1px 0 0 88px;
    gap: 4px;
    background-color: #124d24;
}
.taskbar i {
    flex: none;
    width: 42px;
}
.taskbar .on {
    background-color: #5a9069;
    border: 1px solid #91b59b;
    border-bottom: none;
}
.taskbar .active {
    background-color: #93b89e;
    border-color: #eef4ef;
}
```
